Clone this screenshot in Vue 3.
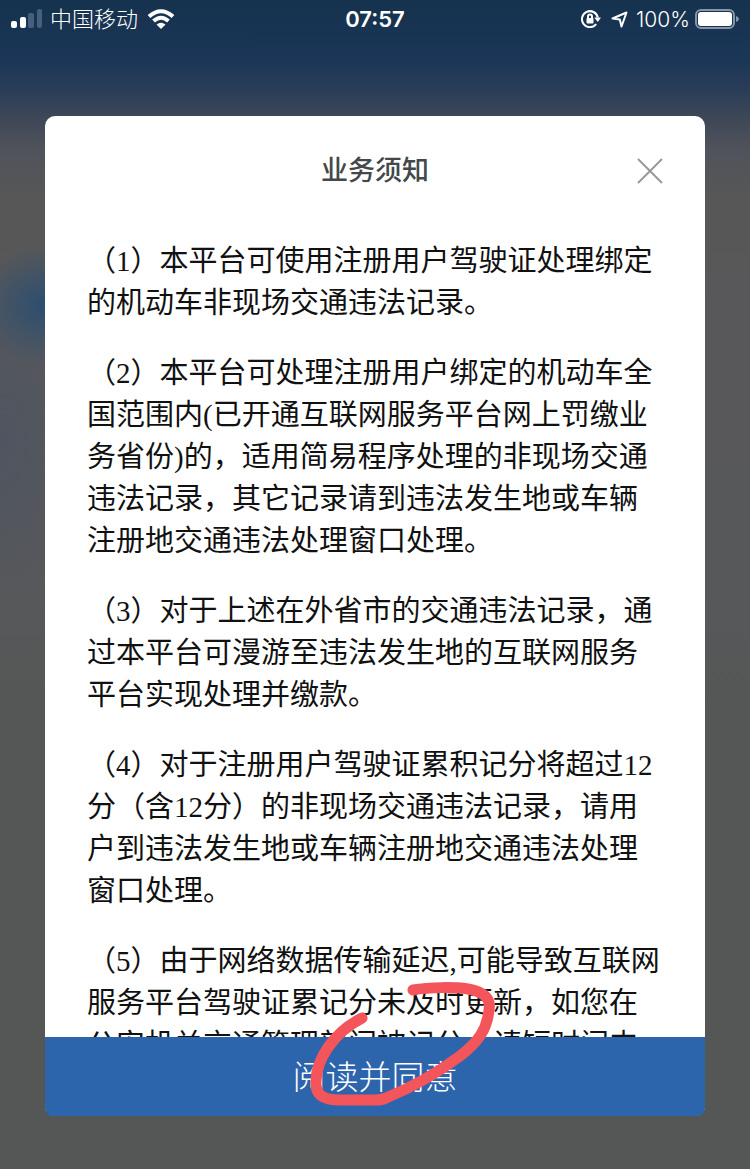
<template>
  <div class="screen">
    <header class="status-bar">
      <div class="status-left">
        <svg class="signal" viewBox="0 0 32 20" aria-hidden="true">
          <rect x="0" y="12" width="6" height="7" rx="2" />
          <rect x="9" y="8" width="6" height="11" rx="2" />
          <rect class="dim" x="17" y="4" width="6" height="15" rx="2" />
          <rect class="dim" x="26" y="0" width="5" height="19" rx="2" />
        </svg>
        <span class="carrier">中国移动</span>
        <svg class="wifi" viewBox="0 0 28 20" aria-hidden="true">
          <path d="M2 7.5Q14 -3 26 7.5" />
          <path d="M6.5 12Q14 5.5 21.5 12" />
          <path class="solid" d="M14 20L9.5 15.5Q14 11.8 18.5 15.5Z" />
        </svg>
      </div>
      <time class="clock">07:57</time>
      <div class="status-right">
        <svg class="lock" viewBox="0 0 20 18" aria-hidden="true">
          <path d="M15.2 14.2A8 8 0 1 1 16.8 7.5" />
          <path class="solid" d="M13.2 7.5H20L16.8 12Z" />
          <rect class="solid" x="5.5" y="8" width="7" height="5.5" rx="1" />
          <path class="shackle" d="M7 8.5V6.5A2 2 0 0 1 11 6.5V8.5" />
        </svg>
        <svg class="arrow" viewBox="0 0 17 17" aria-hidden="true">
          <path d="M1.5 7.5L15.5 1.5L10.5 15.5L8.8 8.5Z" />
        </svg>
        <span class="percent">100%</span>
        <svg class="battery" viewBox="0 0 44 20" aria-hidden="true">
          <rect class="shell" x="1" y="1" width="38" height="18" rx="5" />
          <rect class="level" x="3" y="3" width="34" height="14" rx="3" />
          <path class="tip" d="M41 7Q44 8 44 10Q44 12 41 13Z" />
        </svg>
      </div>
    </header>

    <main class="backdrop">
      <section class="modal" role="dialog" aria-labelledby="notice-title">
        <div class="modal-header">
          <h1 id="notice-title" class="modal-title">业务须知</h1>
          <button class="btn-close" type="button" aria-label="关闭">
            <svg viewBox="0 0 26 26" aria-hidden="true">
              <path d="M1 1L25 25M25 1L1 25" />
            </svg>
          </button>
        </div>

        <div class="modal-body">
          <p v-for="(item, index) in notices" :key="index">（{{ index + 1 }}）{{ item }}</p>
        </div>

        <div class="modal-footer">
          <button class="btn-agree" type="button">阅读并同意</button>
          <svg class="mark" viewBox="0 0 184 120" aria-hidden="true">
            <path d="M103 6C120 3 145 3 158 5C175 8 181 15 179 26C177 46 168 58 150 72C130 87 105 102 76 114C72 116 70 116 65 116H30C12 116 6 110 6 100C5 76 24 48 52 34" />
          </svg>
        </div>
      </section>
    </main>
  </div>
</template>

<script setup>
const notices = [
  '本平台可使用注册用户驾驶证处理绑定的机动车非现场交通违法记录。',
  '本平台可处理注册用户绑定的机动车全国范围内(已开通互联网服务平台网上罚缴业务省份)的，适用简易程序处理的非现场交通违法记录，其它记录请到违法发生地或车辆注册地交通违法处理窗口处理。',
  '对于上述在外省市的交通违法记录，通过本平台可漫游至违法发生地的互联网服务平台实现处理并缴款。',
  '对于注册用户驾驶证累积记分将超过12分（含12分）的非现场交通违法记录，请用户到违法发生地或车辆注册地交通违法处理窗口处理。',
  '由于网络数据传输延迟,可能导致互联网服务平台驾驶证累记分未及时更新，如您在公安机关交通管理部门被记分，请短时间内'
]
</script>

<style>
body {
  background: #555759;
}
</style>

<style scoped>
.screen {
  display: flex;
  flex-direction: column;
  height: 100vh;
  box-sizing: border-box;
  padding-bottom: 53px;
  background:
    radial-gradient(ellipse 70px 60px at 45px 305px, #2c4e70, transparent),
    radial-gradient(ellipse 100px 170px at 0 440px, #4f5560, transparent),
    linear-gradient(#15324e 0, #1b3657 60px, #2a3d58 90px, #3f4857 120px, #50535b 150px, #575757 200px, #58585a 300px, #57585a 600px, #555756 700px, #555756 100%);
  font-family: Inter, "Noto Sans CJK SC", sans-serif;
}

.status-bar {
  display: grid;
  grid-template-columns: 1fr auto 1fr;
  align-items: center;
  height: 38px;
  padding: 0 11px 0 11px;
  color: #fff;
  font-size: 21px;
}

.status-left,
.status-right {
  display: flex;
  align-items: center;
}

.status-right {
  justify-content: flex-end;
}

.status-bar svg {
  fill: #fff;
}

.signal {
  width: 32px;
  height: 20px;
}

.status-bar .signal .dim {
  fill: #45607d;
}

.carrier {
  margin: 0 9px 0 7px;
  font-size: 22px;
  font-weight: 300;
  line-height: 32px;
}

.wifi {
  width: 28px;
  height: 20px;
}

.status-bar .wifi path {
  fill: none;
  stroke: #fff;
  stroke-width: 4;
}

.status-bar .wifi .solid {
  fill: #fff;
  stroke: none;
}

.clock {
  font-size: 22px;
  font-weight: 600;
}

.percent {
  font-weight: 300;
}

.lock {
  width: 20px;
  height: 18px;
}

.lock path {
  fill: none;
  stroke: #fff;
  stroke-width: 2;
}

.lock .solid {
  fill: #fff;
  stroke: none;
}

.arrow {
  width: 17px;
  height: 17px;
  margin: 0 8px 0 10px;
}

.arrow path {
  fill: none;
  stroke: #fff;
  stroke-width: 2;
  stroke-linejoin: round;
}

.battery {
  width: 44px;
  height: 20px;
  margin-left: 5px;
}

.battery .shell {
  fill: none;
  stroke: #8795a8;
  stroke-width: 2;
}

.battery .tip {
  fill: #8795a8;
}

.backdrop {
  flex: 1;
  display: flex;
  min-height: 0;
  padding: 78px 45px 0;
}

.modal {
  flex: 1;
  display: flex;
  flex-direction: column;
  min-width: 0;
  background: #fff;
  border-radius: 10px;
}

.modal-header {
  display: grid;
  grid-template-columns: 1fr auto 1fr;
  align-items: center;
  height: 110px;
  padding: 0 42px;
}

.modal-title {
  grid-column: 2;
  margin: 0;
  color: #43484b;
  font-size: 27px;
  font-weight: 500;
  line-height: 40px;
}

.btn-close {
  justify-self: end;
  display: flex;
  padding: 0;
  border: 0;
  background: none;
  cursor: pointer;
}

.btn-close svg {
  width: 26px;
  height: 26px;
  fill: none;
  stroke: #999;
  stroke-width: 2;
}

.modal-body {
  flex: 1;
  min-height: 0;
  padding: 14px 42px 0;
  overflow-y: auto;
  scrollbar-width: none;
  color: #111;
  font-family: "Liberation Serif", "Noto Sans CJK SC", serif;
  font-size: 29px;
  line-height: 42px;
}

.modal-body p {
  margin: 0 0 28px;
}

.modal-footer {
  position: relative;
}

.btn-agree {
  display: block;
  width: 100%;
  height: 79px;
  padding: 0 0 4px;
  border: 0;
  border-radius: 0 0 8px 8px;
  background: #2d65ad;
  color: #fff;
  font-family: "Noto Sans CJK SC", sans-serif;
  font-size: 33px;
  font-weight: 300;
  cursor: pointer;
}

/* hand-drawn circle over the agree button */
.mark {
  position: absolute;
  left: 50%;
  bottom: 12px;
  width: 184px;
  height: 120px;
  margin-left: -65px;
  overflow: visible;
  fill: none;
  stroke: #f4555a;
  stroke-width: 11;
  stroke-linecap: round;
  stroke-linejoin: round;
  pointer-events: none;
}
</style>
